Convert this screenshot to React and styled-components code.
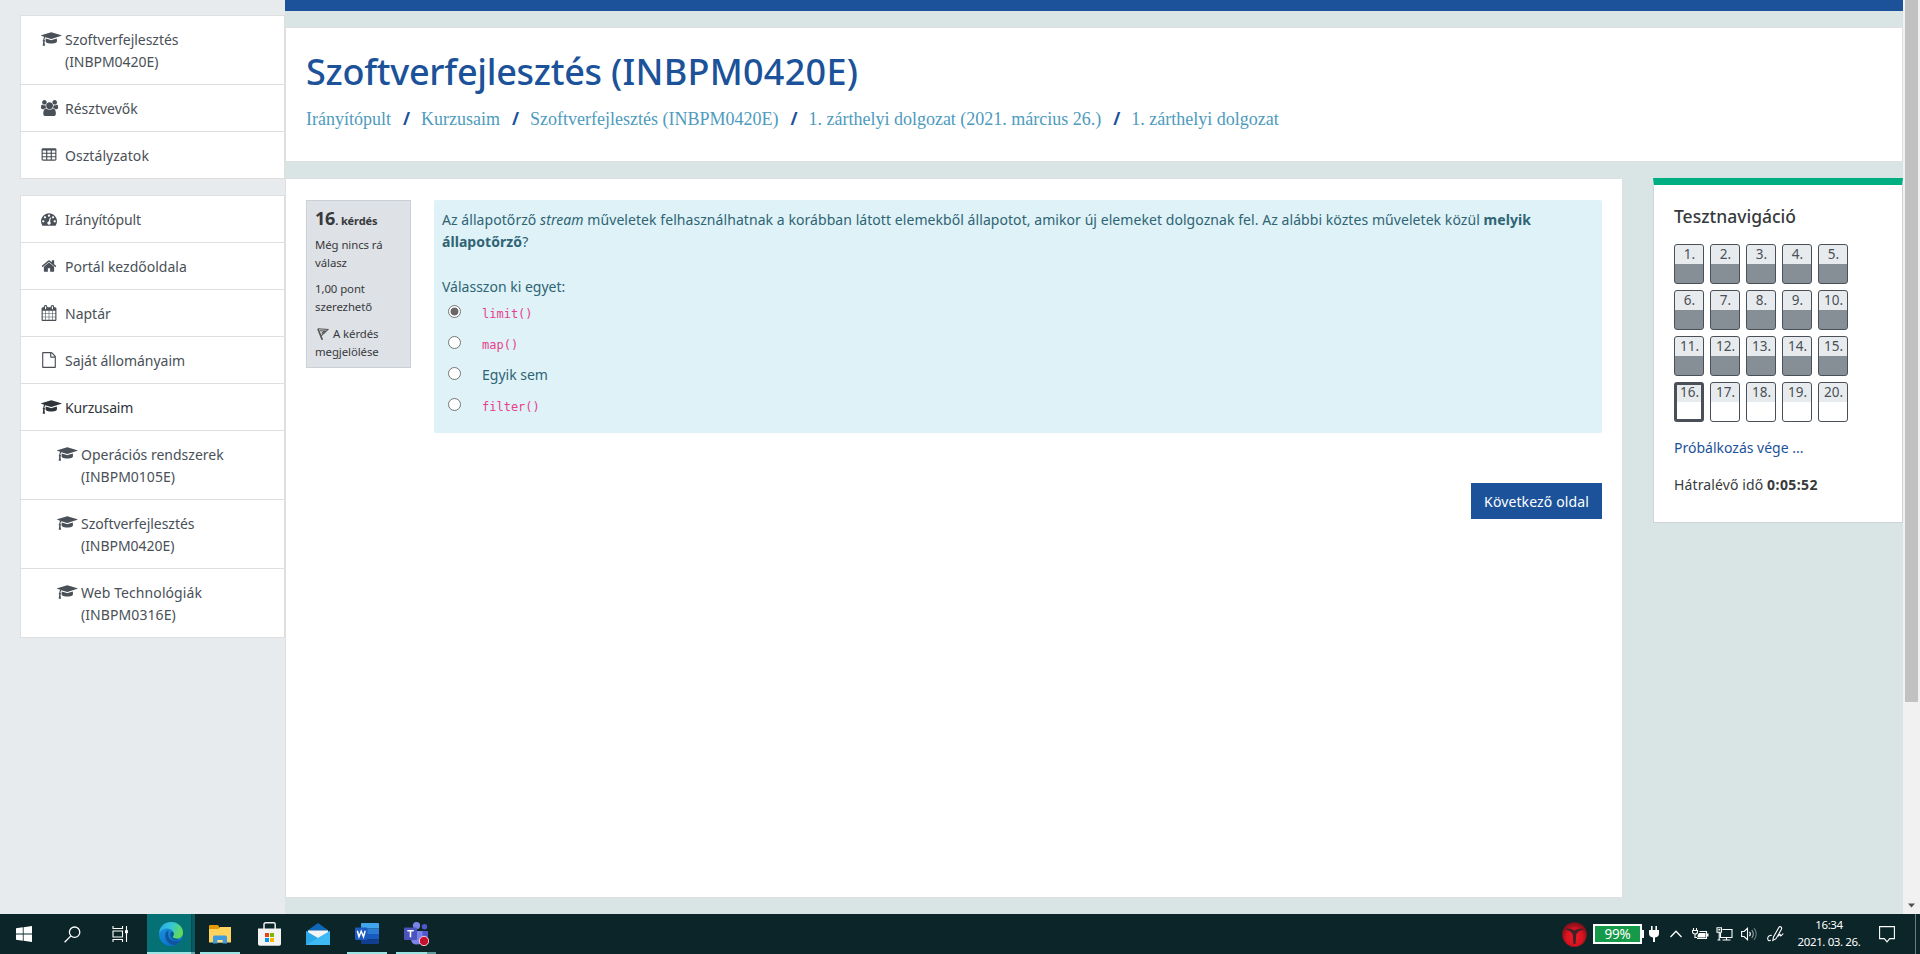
import React from 'react';
import styled, { createGlobalStyle } from 'styled-components';

const Global = createGlobalStyle`
  * { box-sizing: border-box; }
  body {
    margin: 0;
    overflow: hidden;
    font: 400 14px/22px "Noto Sans", "Open Sans", sans-serif;
    color: #373a3c;
  }
`;

const Screen = styled.div`
  display: flex;
  flex-direction: column;
  width: 1920px;
  height: 954px;
  overflow: hidden;
`;
const Page = styled.div`
  display: flex;
  height: 914px;
  background: #d9e5e4;
`;

/* ---------- sidebar ---------- */
const Sidebar = styled.nav`
  display: flex;
  flex-direction: column;
  gap: 16px;
  width: 285px;
  padding: 15px 0 0 20px;
  background: #e8ebee;
`;
const MenuGroup = styled.ul`
  margin: 0;
  padding: 0;
  list-style: none;
  border: 1px solid #dfdfdf;
  border-top: 0;
  background: #fff;
`;
const MenuItem = styled.li`
  display: flex;
  padding: 13px 20px 11px ${(p) => (p.$nested ? 36 : 20)}px;
  border-top: 1px solid #dfdfdf;
  color: ${(p) => (p.$active ? '#2f3438' : '#495057')};
  letter-spacing: ${(p) => p.$track || 0}px;
`;
const MenuIcon = styled.span`
  flex: none;
  width: 24px;
  height: 22px;
  padding-top: 2px;
  svg { display: block; height: 16px; fill: currentColor; overflow: visible; }
`;
const MenuLabel = styled.span`
  white-space: pre-line;
`;

/* ---------- main column ---------- */
const Main = styled.main`
  display: flex;
  flex-direction: column;
  width: 1618px;
`;
const TopBar = styled.div`
  height: 11px;
  margin-bottom: 16px;
  background: #1b5299;
`;
const Header = styled.header`
  height: 135px;
  margin-bottom: 16px;
  padding: 22px 20px 0;
  border: 1px solid #dfdfdf;
  background: #fff;
`;
const Title = styled.h1`
  margin: 0 0 13px;
  font-size: 36px;
  font-weight: 500;
  line-height: 44px;
  color: #1b5299;
  letter-spacing: -0.27px;
`;
const CourseCode = styled.span`
  letter-spacing: 0.26px;
`;
const Breadcrumb = styled.div`
  display: flex;
  font: 18px/24px "Liberation Serif", serif;
  color: #4d9bbd;
`;
const Crumb = styled.a`
  white-space: nowrap;
`;
const Slash = styled.span`
  width: 30px;
  padding-left: 1px;
  text-align: center;
  font: 700 17px/24px "Noto Sans", sans-serif;
  color: #1b5299;
`;
const Columns = styled.div`
  display: flex;
  align-items: flex-start;
  gap: 30px;
`;
const Content = styled.section`
  width: 1338px;
  height: 720px;
  padding: 21px 20px 0;
  border: 1px solid #dfdfdf;
  background: #fff;
`;
const Question = styled.div`
  display: flex;
  align-items: flex-start;
  gap: 23px;
`;
const Info = styled.aside`
  width: 105px;
  height: 168px;
  padding: 5px 8px 0;
  border: 1px solid #cad0d7;
  background: #dee1e6;
  font-size: 11.4px;
  line-height: 18px;
  letter-spacing: -0.08px;
`;
const InfoTitle = styled.h3`
  margin: 0;
  font-size: 11px;
  font-weight: 700;
  line-height: 24px;
  letter-spacing: -0.12px;
`;
const InfoNumber = styled.span`
  font-size: 18px;
  letter-spacing: -0.2px;
`;
const InfoText = styled.p`
  margin: ${(p) => p.$gap}px 0 0;
  white-space: pre-line;
  svg { margin: 0 4px -2px 2px; }
`;
const Formulation = styled.div`
  width: 1168px;
  height: 233px;
  padding: 9px 8px 0;
  border-radius: 2px;
  background: #def2f8;
  color: #2f6473;
`;
const Prompt = styled.p`
  margin: 0 0 23px;
  letter-spacing: 0.062px;
`;
const Ask = styled.div`
  letter-spacing: 0;
`;
const Answer = styled.label`
  display: flex;
  align-items: flex-start;
  height: 31px;
  padding-left: 6px;
`;
const Radio = styled.input`
  appearance: none;
  width: 13px;
  height: 13px;
  margin: 7px 21px 0 0;
  border: 1px solid #767676;
  border-radius: 50%;
  background: #fff;
  &:checked { background: radial-gradient(circle, #686868 0 3.6px, #fff 4.3px); }
`;
const AnswerText = styled.span`
  padding-top: 4px;
`;
const Code = styled.code`
  font: 12px "DejaVu Sans Mono", monospace;
  color: #e83e8c;
`;
const Submit = styled.div`
  display: flex;
  justify-content: flex-end;
  margin-top: 50px;
`;
const NextButton = styled.button`
  width: 131px;
  height: 36px;
  padding: 1px 0 0;
  border: 0;
  background: #1b5299;
  color: #fff;
  font: inherit;
  letter-spacing: 0.12px;
`;

/* ---------- quiz navigation ---------- */
const QuizNav = styled.aside`
  width: 250px;
  height: 345px;
  padding: 20px 20px 0;
  border: 1px solid #ced4da;
  border-top: 7px solid #00af81;
  background: #fff;
`;
const QuizTitle = styled.h2`
  margin: 0 0 17px;
  font-size: 17.5px;
  font-weight: 500;
  line-height: 22px;
`;
const QuizGrid = styled.div`
  display: grid;
  grid-template-columns: repeat(5, 30px);
  grid-auto-rows: 40px;
  gap: 6px;
`;
const QuizButton = styled.a`
  overflow: hidden;
  padding-left: 1px;
  border: ${(p) => (p.$current ? 3 : 1)}px solid #495057;
  border-radius: 3px;
  background: linear-gradient(#e8ebee ${(p) => (p.$current ? 17 : 19)}px, ${(p) => (p.$done ? '#868e96' : '#fff')} 0);
  color: #495057;
  font-size: 13.5px;
  line-height: 18px;
  text-align: center;
  span { display: block; margin: ${(p) => (p.$current ? '-2px -2px 0' : '0')}; }
`;
const FinishLink = styled.a`
  display: block;
  margin-top: 15px;
  color: #1b5299;
`;
const TimeLeft = styled.div`
  margin-top: 15px;
  letter-spacing: 0.12px;
  b { letter-spacing: 0.42px; }
`;

/* ---------- scrollbar ---------- */
const Scrollbar = styled.div`
  display: flex;
  flex-direction: column;
  align-items: center;
  justify-content: space-between;
  width: 17px;
  padding-bottom: 6px;
  background: #f1f1f1;
`;
const Thumb = styled.div`
  width: 13px;
  height: 702px;
  background: #c1c1c1;
`;

/* ---------- taskbar ---------- */
const Taskbar = styled.footer`
  display: flex;
  justify-content: space-between;
  height: 40px;
  background: #0b2528;
  color: #fff;
`;
const Apps = styled.div`
  display: flex;
  gap: 1px;
`;
const AppSlot = styled.div`
  display: flex;
  align-items: center;
  justify-content: center;
  width: 48px;
  height: 40px;
`;
const Tool = styled(AppSlot)`
  width: 47px;
  &:first-child { width: 48px; }
`;
const ActiveApp = styled(AppSlot)`
  margin-left: 2px;
  padding-right: 1px;
  background:
    linear-gradient(90deg, #9be5e5 44px, #6aa9ab 0) 0 38px / 48px 2px no-repeat,
    linear-gradient(90deg, #067175 44px, #024b50 44px 45px, #085a5f 45px);
`;
const Running = styled(AppSlot)`
  background: linear-gradient(90deg, #9be5e5 ${(p) => (p.$multi ? 31 : 40)}px, #5e9a9c 0) 4px 38px / 40px 2px no-repeat;
`;
const Tray = styled.div`
  display: flex;
  align-items: center;
`;
const TrayIcon = styled.div`
  display: flex;
  justify-content: center;
  width: ${(p) => p.$w}px;
`;
const Notifications = styled(TrayIcon)`
  padding-right: 12px;
`;
const Battery = styled.div`
  width: 49px;
  height: 20px;
  margin-left: 6px;
  border: 2px solid #fff;
  background: #149a48;
  font-size: 13.5px;
  line-height: 16px;
  text-align: center;
  letter-spacing: -0.2px;
`;
const BatteryTip = styled.div`
  width: 2px;
  height: 8px;
  background: #fff;
`;
const Clock = styled.div`
  width: 84px;
  height: 40px;
  padding-top: 2px;
  font-size: 11.5px;
  line-height: 17px;
  text-align: center;
  letter-spacing: -0.38px;
`;
const ShowDesktop = styled.div`
  width: 5px;
  height: 40px;
  border-left: 1px solid #6d7c7e;
`;

/* ---------- menu glyphs ---------- */
const cell = (x, y) =>
  `M${x} ${y}v-192q0-14-9-23t-23-9h-320q-14 0-23 9t-9 23v192q0 14 9 23t23 9h320q14 0 23-9t9-23z`;
const cells = [576, 1088, 1600].flatMap((x) => [608, 992, 1376].map((y) => cell(x, y))).join('');
const glyphs = {
  cap: [2304, 'M1774 836l18 316q4 69-82 128t-235 93.5-323 34.5-323-34.5-235-93.5-82-128l18-316 574 181q22 7 48 7t48-7zm530-324q0 23-22 31l-1120 352q-4 1-10 1t-10-1l-652-206q-43 34-71 111.5t-34 178.5q63 36 63 109 0 69-58 107l58 433q2 14-8 25-9 11-24 11h-192q-15 0-24-11-10-11-8-25l58-433q-58-38-58-107 0-73 65-111 11-207 98-330l-333-104q-22-8-22-31t22-31l1120-352q4-1 10-1t10 1l1120 352q22 8 22 31z'],
  users: [1920, 'M593 896q-162 5-265 128h-134q-82 0-138-40.5t-56-118.5q0-353 124-353 6 0 43.5 21t97.5 42.5 119 21.5q67 0 133-23-5 37-5 66 0 139 81 256zm1071 637q0 120-73 189.5t-194 69.5h-874q-121 0-194-69.5t-73-189.5q0-53 3.5-103.5t14-109 26.5-108.5 43-97.5 62-81 85.5-53.5 111.5-20q10 0 43 21.5t73 48 107 48 135 21.5 135-21.5 107-48 73-48 43-21.5q61 0 111.5 20t85.5 53.5 62 81 43 97.5 26.5 108.5 14 109 3.5 103.5zm-1024-1277q0 106-75 181t-181 75-181-75-75-181 75-181 181-75 181 75 75 181zm704 384q0 159-112.5 271.5t-271.5 112.5-271.5-112.5-112.5-271.5 112.5-271.5 271.5-112.5 271.5 112.5 112.5 271.5zm576 225q0 78-56 118.5t-138 40.5h-134q-103-123-265-128 81-117 81-256 0-29-5-66 66 23 133 23 59 0 119-21.5t97.5-42.5 43.5-21q124 0 124 353zm-128-609q0 106-75 181t-181 75-181-75-75-181 75-181 181-75 181 75 75 181z'],
  table: [1792, `${cells}M1728 288v1088q0 66-47 113t-113 47h-1344q-66 0-113-47t-47-113v-1088q0-66 47-113t113-47h1344q66 0 113 47t47 113z`],
  dash: [1792, 'M384 1152q0-53-37.5-90.5t-90.5-37.5-90.5 37.5-37.5 90.5 37.5 90.5 90.5 37.5 90.5-37.5 37.5-90.5zm192-448q0-53-37.5-90.5t-90.5-37.5-90.5 37.5-37.5 90.5 37.5 90.5 90.5 37.5 90.5-37.5 37.5-90.5zm428 481l101-382q6-26-7.5-48.5t-38.5-29.5-48 6.5-30 39.5l-101 382q-60 5-107 43.5t-63 98.5q-20 77 20 146t117 89 146-20 89-117q16-60-6-117t-72-91zm660-33q0-53-37.5-90.5t-90.5-37.5-90.5 37.5-37.5 90.5 37.5 90.5 90.5 37.5 90.5-37.5 37.5-90.5zm-640-640q0-53-37.5-90.5t-90.5-37.5-90.5 37.5-37.5 90.5 37.5 90.5 90.5 37.5 90.5-37.5 37.5-90.5zm448 192q0-53-37.5-90.5t-90.5-37.5-90.5 37.5-37.5 90.5 37.5 90.5 90.5 37.5 90.5-37.5 37.5-90.5zm320 448q0 261-141 483-19 29-54 29h-1402q-35 0-54-29-141-221-141-483 0-182 71-348t191-286 286-191 348-71 348 71 286 191 191 286 71 348z'],
  home: [1792, 'M1472 992v480q0 26-19 45t-45 19h-384v-384h-256v384h-384q-26 0-45-19t-19-45v-480q0-1 .5-3t.5-3l575-474 575 474q1 2 1 6zm223-69l-62 74q-8 9-21 11h-3q-13 0-21-7l-692-577-692 577q-12 8-24 7-13-2-21-11l-62-74q-8-10-7-23.5t11-21.5l719-599q32-26 76-26t76 26l244 204v-195q0-14 9-23t23-9h192q14 0 23 9t9 23v408l219 182q10 8 11 21.5t-7 23.5z'],
  calendar: [1792, 'M192 1664h288v-288h-288v288zm352 0h320v-288h-320v288zm-352-352h288v-320h-288v320zm352 0h320v-320h-320v320zm-352-384h288v-288h-288v288zm736 736h320v-288h-320v288zm-384-736h320v-288h-320v288zm768 736h288v-288h-288v288zm-384-352h320v-320h-320v320zm-352-864v-288q0-13-9.5-22.5t-22.5-9.5h-64q-13 0-22.5 9.5t-9.5 22.5v288q0 13 9.5 22.5t22.5 9.5h64q13 0 22.5-9.5t9.5-22.5zm736 864h288v-320h-288v320zm-384-384h320v-288h-320v288zm384 0h288v-288h-288v288zm32-480v-288q0-13-9.5-22.5t-22.5-9.5h-64q-13 0-22.5 9.5t-9.5 22.5v288q0 13 9.5 22.5t22.5 9.5h64q13 0 22.5-9.5t9.5-22.5zm384-64v1280q0 52-38 90t-90 38h-1408q-52 0-90-38t-38-90v-1280q0-52 38-90t90-38h128v-96q0-66 47-113t113-47h64q66 0 113 47t47 113v96h384v-96q0-66 47-113t113-47h64q66 0 113 47t47 113v96h128q52 0 90 38t38 90z'],
  file: [1792, 'M1596 380q28 28 48 76t20 88v1152q0 40-28 68t-68 28h-1344q-40 0-68-28t-28-68v-1600q0-40 28-68t68-28h896q40 0 88 20t76 48zm-444-244v376h376q-10-29-22-41l-313-313q-12-12-41-22zm384 1528v-1024h-416q-40 0-68-28t-28-68v-416h-768v1536h1280z'],
};
const Glyph = ({ name }) => (
  <svg viewBox={`0 0 ${glyphs[name][0]} 1792`}>
    <path fillRule={name === 'table' ? 'evenodd' : 'nonzero'} d={glyphs[name][1]} />
  </svg>
);

const courseMenu = [
  { icon: 'cap', label: 'Szoftverfejlesztés\n(INBPM0420E)', track: -0.04 },
  { icon: 'users', label: 'Résztvevők' },
  { icon: 'table', label: 'Osztályzatok', track: 0.05 },
];
const siteMenu = [
  { icon: 'dash', label: 'Irányítópult', track: -0.08 },
  { icon: 'home', label: 'Portál kezdőoldala' },
  { icon: 'calendar', label: 'Naptár' },
  { icon: 'file', label: 'Saját állományaim', track: -0.03 },
  { icon: 'cap', label: 'Kurzusaim', active: true, track: -0.15 },
  { icon: 'cap', label: 'Operációs rendszerek\n(INBPM0105E)', nested: true },
  { icon: 'cap', label: 'Szoftverfejlesztés\n(INBPM0420E)', nested: true, track: -0.04 },
  { icon: 'cap', label: 'Web Technológiák\n(INBPM0316E)', nested: true, track: 0.08 },
];
const Menu = ({ items }) => (
  <MenuGroup>
    {items.map((m) => (
      <MenuItem key={m.label} $nested={m.nested} $active={m.active} $track={m.track}>
        <MenuIcon><Glyph name={m.icon} /></MenuIcon>
        <MenuLabel>{m.label}</MenuLabel>
      </MenuItem>
    ))}
  </MenuGroup>
);

const crumbs = ['Irányítópult', 'Kurzusaim', 'Szoftverfejlesztés (INBPM0420E)', '1. zárthelyi dolgozat (2021. március 26.)', '1. zárthelyi dolgozat'];
const answers = [
  { text: 'limit()', code: true, checked: true },
  { text: 'map()', code: true },
  { text: 'Egyik sem' },
  { text: 'filter()', code: true },
];

/* ---------- taskbar drawings ---------- */
const StartIcon = () => (
  <svg width="16" height="16" fill="#fff">
    <path d="M0 2.3 6.8 1.3V7.6H0zM7.6 1.2 16 0V7.6H7.6zM0 8.4H6.8V14.7L0 13.7zM7.6 8.4H16V16L7.6 14.8z" />
  </svg>
);
const SearchIcon = () => (
  <svg width="17" height="17" fill="none" stroke="#fff" strokeWidth="1.3">
    <circle cx="10.6" cy="6.2" r="5.2" /><path d="M6.9 9.9.6 16.3" />
  </svg>
);
const TaskViewIcon = () => (
  <svg width="17" height="16" fill="none" stroke="#fff" strokeWidth="1.1">
    <path d="M1 0v2.5h9.5V0M1 16v-2.5h9.5V16M1 5h9.5v6H1zM14.5 0v16" />
    <path d="M13 4.2h3v3h-3z" fill="#fff" stroke="none" />
  </svg>
);
const EdgeIcon = () => (
  <svg width="24" height="24" viewBox="0 0 24 24">
    <defs>
      <linearGradient id="eg1" x1="0" y1="0.2" x2="1" y2="0.5">
        <stop offset="0" stopColor="#2aa9e6" /><stop offset=".5" stopColor="#36c8d4" /><stop offset="1" stopColor="#67db4e" />
      </linearGradient>
      <linearGradient id="eg2" x1="0" y1="0" x2=".6" y2="1">
        <stop offset="0" stopColor="#1b9be0" /><stop offset="1" stopColor="#0b6fcc" />
      </linearGradient>
    </defs>
    <circle cx="12" cy="12" r="12" fill="url(#eg2)" />
    <path d="M.1 11.3C1 3.8 6.2 0 12 0c7 0 12 5 12 10.6 0 4-3 6.3-6.4 6.3-2.5 0-4-1-4-1.8 0-.7 1.1-1.2 1.1-3.2 0-2.4-2.3-5.4-6.3-5.4C4.300 6.500 1.200 8.800.1 11.300z" fill="url(#eg1)" />
    <path d="M9.300 8.300c-3 1.500-3.600 5-2.600 8.200 1.400 4 5.200 6.700 9.200 6.700 2.600-1 5-2.900 6.300-5.400-1.400.8-3 1.200-4.800 1.200-4.600 0-8.300-2.600-8.300-6.600 0-1.600.8-3 .2-4.100z" fill="#11549f" />
    <path d="M14.700 12c0-.9-.3-1.700-.9-2.400-1.500.2-2.400 1.400-2.400 2.900 0 2 1.300 3.900 3.300 4.900 1.700.8 3 .8 4.200.4l.3-1.200c-2.800.3-5.600-.6-5.600-1.500 0-.7 1.100-1.200 1.100-3.100z" fill="#0a5c80" />
  </svg>
);
const ExplorerIcon = () => (
  <svg width="22" height="19">
    <path d="M0 1q0-1 1-1h8l1.500 2.500V5H0z" fill="#e59a08" />
    <path d="M0 4h9.500L11 2h11v15.500H0z" fill="#ffd45e" />
    <path d="M4 18.500V12q0-1.500 1.500-1.500h11q1.500 0 1.500 1.500v6.500h-4.500V15H8.500v3.500z" fill="#3f9be0" />
    <path d="M8.500 15h5v2.500h-5z" fill="#ffe28a" />
  </svg>
);
const StoreIcon = () => (
  <svg width="23" height="24">
    <path d="M6 7V2.500Q6 .8 7.700.8h8q1.500 0 1.500 1.700V7" fill="none" stroke="#eee" strokeWidth="1.500" />
    <path d="M0 6.500h23V22q0 1.800-1.800 1.800H1.800Q0 23.800 0 22z" fill="#f3f3f3" />
    <path d="M7 11h4v4H7z" fill="#e8411c" /><path d="M12 11h4v4h-4z" fill="#7eb700" />
    <path d="M7 16h4v4H7z" fill="#0098e8" /><path d="M12 16h4v4h-4z" fill="#fdb500" />
  </svg>
);
const MailIcon = () => (
  <svg width="24" height="22">
    <path d="M0 8.500 12 0l12 8.500V12H0z" fill="#0f68b5" />
    <path d="M2 7.500h20v8H2z" fill="#f4f4f4" />
    <path d="M0 8 12 15 24 8v14H0z" fill="#2aa8ea" />
    <path d="M0 22 24 8v14z" fill="#45bff5" opacity=".75" />
  </svg>
);
const WordIcon = () => (
  <svg width="24" height="22">
    <path d="M6 1q0-1 1-1h16q1 0 1 1v4.500H6z" fill="#41a5ee" />
    <path d="M6 5.500h18V11H6z" fill="#2b7cd3" /><path d="M6 11h18v5.500H6z" fill="#185abd" />
    <path d="M6 16.500h18V20q0 1-1 1H7q-1 0-1-1z" fill="#103f91" />
    <rect y="4.500" width="12.500" height="12.500" rx="1" fill="#1b5bbd" />
    <path d="M2.300 7.800 4 13.700 6.200 8.300 8.500 13.700 10.200 7.800" fill="none" stroke="#fff" strokeWidth="1.500" />
  </svg>
);
const TeamsIcon = () => (
  <svg width="25" height="24">
    <circle cx="20.500" cy="4.800" r="2.700" fill="#5059c9" />
    <circle cx="12.500" cy="3.600" r="3.600" fill="#7b83eb" />
    <path d="M16 9h8v7q0 4-4 4h-4z" fill="#5059c9" />
    <path d="M7 9h11.500v8q0 5.500-5.700 5.500T7 17z" fill="#7b83eb" />
    <rect y="5.500" width="13" height="12.500" rx="1" fill="#4b53bc" />
    <path d="M3.300 8.800h6.400M6.500 8.800v6.500" stroke="#fff" strokeWidth="1.600" />
    <circle cx="20" cy="19" r="4.700" fill="#c4112f" stroke="#f0d5da" />
  </svg>
);
const RedBall = () => (
  <svg width="25" height="25">
    <defs>
      <radialGradient id="rb" cx=".5" cy=".6" r=".55">
        <stop offset="0" stopColor="#f01b26" /><stop offset=".6" stopColor="#d81420" /><stop offset="1" stopColor="#85101a" />
      </radialGradient>
    </defs>
    <circle cx="12.500" cy="12.500" r="12.300" fill="url(#rb)" />
    <path d="M2 7q5.500-1.500 10.500 1.500Q17.500 5.500 23 7q-6.500 1-8.700 5L13.500 22h-2l-.8-10Q8.500 8 2 7z" fill="#3a2428" />
  </svg>
);
const PlugIcon = () => (
  <svg width="10" height="16" fill="#fff">
    <path d="M2 0h1.600v4h2.800V0H8v4h2v3.500q0 3.500-4 4V16H4v-4.500q-4-.5-4-4V4h2z" />
  </svg>
);
const ChevronIcon = () => (
  <svg width="12" height="8" fill="none" stroke="#fff" strokeWidth="1.300"><path d="M.5 7 6 1.300 11.500 7" /></svg>
);
const ChargeIcon = () => (
  <svg width="17" height="14" fill="none" stroke="#fff" strokeWidth="1.100">
    <path d="M1.500 1v2M4.500 1v2M.5 3.500h5V5q0 2-2.500 2T.5 5zM3 7v3.500h2M7.500 4.500h7v7H5" />
    <path d="M7 6h6.500v4.500H5.500V8.500zM15 6.500h1.500v3H15z" fill="#fff" stroke="none" />
  </svg>
);
const NetworkIcon = () => (
  <svg width="17" height="14" fill="none" stroke="#fff" strokeWidth="1.100">
    <path d="M6.500 2.500h9.500v8H4.500V6M10.500 10.500v2.500M6.500 13h8M1 .8h4.500v4.500H1zM3.200 5.500v7.500M1.500 13h3" />
    <path d="M2.300 2h2v1.500h-2z" fill="#fff" stroke="none" />
  </svg>
);
const SpeakerIcon = () => (
  <svg width="17" height="14" fill="none" stroke="#fff" strokeWidth="1.100">
    <path d="M.6 4.500h2.500L6.500 1.300v11.400L3.100 9.500H.6zM8.500 4.800q1.700 2.200 0 4.400" />
    <path d="M10.800 3q3 4 0 8" opacity=".6" /><path d="M13 1.200q4.500 5.800 0 11.600" opacity=".4" />
  </svg>
);
const PenIcon = () => (
  <svg width="17" height="16" fill="none" stroke="#fff" strokeWidth="1.100">
    <path d="M5.800 14.500 6.500 11 11.800 1.500Q12.800.2 14 1t.3 2.500L9 12.700zM4.800 9.200Q.8 9.200.7 12.500.8 15.600 3.800 14.300M11 10.500Q13.500 7 13.300 9.300 13.200 11 16.300 7.500" />
  </svg>
);
const NoticeIcon = () => (
  <svg width="16" height="17" fill="none" stroke="#fff" strokeWidth="1.100">
    <path d="M.6.600h14.800v12h-4.700L8 15.800 5.300 12.600H.6z" />
  </svg>
);

export default function App() {
  return (
    <Screen>
      <Global />
      <Page>
        <Sidebar>
          <Menu items={courseMenu} />
          <Menu items={siteMenu} />
        </Sidebar>
        <Main>
          <TopBar />
          <Header>
            <Title>Szoftverfejlesztés <CourseCode>(INBPM0420E)</CourseCode></Title>
            <Breadcrumb>
              {crumbs.map((c, i) => (
                <React.Fragment key={c}>
                  {i > 0 && <Slash>/</Slash>}
                  <Crumb>{c}</Crumb>
                </React.Fragment>
              ))}
            </Breadcrumb>
          </Header>
          <Columns>
            <Content>
              <Question>
                <Info>
                  <InfoTitle><InfoNumber>16</InfoNumber>. kérdés</InfoTitle>
                  <InfoText $gap={3}>{'Még nincs rá\nválasz'}</InfoText>
                  <InfoText $gap={8}>{'1,00 pont\nszerezhető'}</InfoText>
                  <InfoText $gap={9}>
                    <svg width="12" height="12" fill="none" stroke="#555" strokeWidth="1.100">
                      <path d="M.8.800 11 1.500 4.200 7.800M3 2.800 7.800 3 4.700 5.500" />
                      <path d="M1 1 5.300 11.800" strokeWidth="1.700" />
                    </svg>
                    {'A kérdés\nmegjelölése'}
                  </InfoText>
                </Info>
                <Formulation>
                  <Prompt>
                    Az állapotőrző <i>stream</i> műveletek felhasználhatnak a korábban látott elemekből állapotot, amikor új
                    elemeket dolgoznak fel. Az alábbi köztes műveletek közül <b>melyik<br />állapotőrző</b>?
                  </Prompt>
                  <Ask>Válasszon ki egyet:</Ask>
                  {answers.map((a) => (
                    <Answer key={a.text}>
                      <Radio type="radio" name="answer" defaultChecked={a.checked} />
                      <AnswerText>{a.code ? <Code>{a.text}</Code> : a.text}</AnswerText>
                    </Answer>
                  ))}
                </Formulation>
              </Question>
              <Submit><NextButton>Következő oldal</NextButton></Submit>
            </Content>
            <QuizNav>
              <QuizTitle>Tesztnavigáció</QuizTitle>
              <QuizGrid>
                {Array.from({ length: 20 }, (_, i) => (
                  <QuizButton key={i} $done={i < 15} $current={i === 15}><span>{i + 1}.</span></QuizButton>
                ))}
              </QuizGrid>
              <FinishLink>Próbálkozás vége ...</FinishLink>
              <TimeLeft>Hátralévő idő <b>0:05:52</b></TimeLeft>
            </QuizNav>
          </Columns>
        </Main>
        <Scrollbar>
          <Thumb />
          <svg width="7" height="5"><path d="M0 .5h7L3.500 4.500z" fill="#505050" /></svg>
        </Scrollbar>
      </Page>
      <Taskbar>
        <Apps>
          <Tool><StartIcon /></Tool>
          <Tool><SearchIcon /></Tool>
          <Tool><TaskViewIcon /></Tool>
          <ActiveApp><EdgeIcon /></ActiveApp>
          <Running><ExplorerIcon /></Running>
          <AppSlot><StoreIcon /></AppSlot>
          <AppSlot><MailIcon /></AppSlot>
          <Running><WordIcon /></Running>
          <Running $multi><TeamsIcon /></Running>
        </Apps>
        <Tray>
          <RedBall />
          <Battery>99%</Battery>
          <BatteryTip />
          <TrayIcon $w={20}><PlugIcon /></TrayIcon>
          <TrayIcon $w={24}><ChevronIcon /></TrayIcon>
          <TrayIcon $w={24}><ChargeIcon /></TrayIcon>
          <TrayIcon $w={24}><NetworkIcon /></TrayIcon>
          <TrayIcon $w={27}><SpeakerIcon /></TrayIcon>
          <TrayIcon $w={24}><PenIcon /></TrayIcon>
          <Clock>16:34<br />2021. 03. 26.</Clock>
          <Notifications $w={44}><NoticeIcon /></Notifications>
          <ShowDesktop />
        </Tray>
      </Taskbar>
    </Screen>
  );
}
